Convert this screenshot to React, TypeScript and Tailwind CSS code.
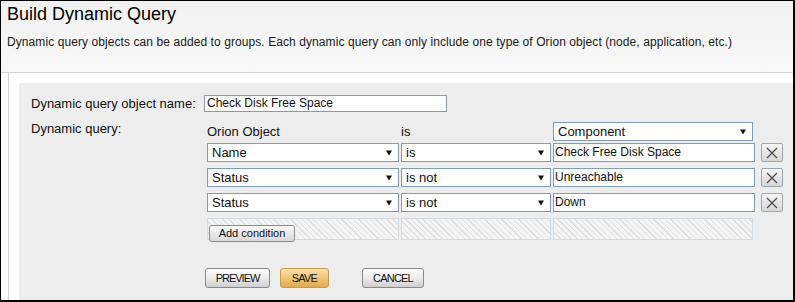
import React from 'react';

const conditions = [
  { field: 'Name', op: 'is', value: 'Check Free Disk Space' },
  { field: 'Status', op: 'is not', value: 'Unreachable' },
  { field: 'Status', op: 'is not', value: 'Down' },
];

function Arrow() {
  return (
    <svg width="6" height="6" viewBox="0 0 6 6" className="shrink-0">
      <polygon points="0,0.5 6,0.5 3,5.5" fill="#111" />
    </svg>
  );
}

function Select({ label, className }: { label: string; className: string }) {
  return (
    <div className={`h-[19px] flex items-center justify-between bg-white border border-[#7f9db9] pl-[4px] pr-[6px] text-[13px] leading-[15px] text-[#111] ${className}`}>
      <span>{label}</span>
      <Arrow />
    </div>
  );
}

function RemoveButton() {
  return (
    <div className="ml-[6px] w-[22px] h-[19px] flex items-center justify-center rounded-[2px] border border-[#9aa7b5] bg-gradient-to-b from-[#f6f6f6] to-[#d6d6d6]">
      <svg width="12" height="12" viewBox="0 0 12 12">
        <path d="M1 1 L11 11 M11 1 L1 11" stroke="#4a4a4a" strokeWidth="1.2" />
      </svg>
    </div>
  );
}

const hatch =
  'border border-[#d3dbe5] bg-[repeating-linear-gradient(45deg,#dedede_0px,#dedede_1px,#f4f4f4_1px,#f4f4f4_4px)]';

export default function App() {
  return (
    <div className="w-[795px] h-[302px] flex flex-col bg-white border-l border-t border-r-2 border-b-2 border-black font-['Liberation_Sans',Arial,sans-serif] text-black">
      <div className="h-[72px] shrink-0 bg-gradient-to-b from-[#f1f1f1] to-[#f9f9f9] border-b border-[#d4d4d4] px-[6px] pt-[2px]">
        <h1 className="text-[18px] leading-[22px]">Build Dynamic Query</h1>
        <p className="mt-[10px] text-[12px] leading-[14px] tracking-[0.08px] text-[#1a1a1a]">
          Dynamic query objects can be added to groups. Each dynamic query can only include one type of Orion object (node, application, etc.)
        </p>
      </div>

      <div className="flex-1 flex pl-[7px]">
        <div className="flex-1 flex border-l border-[#d4d4d4] pl-[10px] pt-[10px]">
          <div className="flex-1 bg-[#ededed] pl-[12px] pt-[12px]">
            <div className="flex items-center">
              <div className="w-[173px] text-[13px] leading-[15px] text-[#111]">Dynamic query object name:</div>
              <div className="w-[243px] h-[17px] bg-white border border-[#7f9db9] px-[2px] text-[12px] leading-[15px] text-[#111]">
                Check Disk Free Space
              </div>
            </div>

            <div className="flex mt-[10px]">
              <div className="w-[173px] text-[13px] leading-[13px] text-[#111]">Dynamic query:</div>
              <div className="ml-[3px]">
                <div className="flex items-center h-[19px] text-[13px] text-[#111]">
                  <div className="w-[192px]">Orion Object</div>
                  <div className="w-[150px] ml-[2px]">is</div>
                  <Select label="Component" className="w-[200px] ml-[2px]" />
                </div>

                {conditions.map((c, i) => (
                  <div key={i} className={`flex items-center ${i === 0 ? 'mt-[2px]' : 'mt-[6px]'}`}>
                    <Select label={c.field} className="w-[192px]" />
                    <Select label={c.op} className="w-[150px] ml-[2px]" />
                    <div className="w-[202px] h-[19px] ml-[2px] bg-white border border-[#7f9db9] px-[1px] text-[12px] leading-[17px] text-[#111]">
                      {c.value}
                    </div>
                    <RemoveButton />
                  </div>
                ))}

                <div className="flex mt-[6px] h-[22px]">
                  <div className={`w-[192px] ${hatch} p-px`}>
                    <button className="w-[86px] h-[17px] rounded-[3px] border border-[#8c8c8c] bg-gradient-to-b from-[#fbfbfb] to-[#d8d8d8] text-[11px] leading-[15px] text-[#111]">
                      Add condition
                    </button>
                  </div>
                  <div className={`w-[150px] ml-[2px] ${hatch}`} />
                  <div className={`w-[200px] ml-[2px] ${hatch}`} />
                </div>
              </div>
            </div>

            <div className="flex mt-[28px] ml-[174px]">
              <button className="w-[65px] h-[20px] rounded-[3px] border border-[#8a8a8a] bg-gradient-to-b from-[#fcfcfc] via-[#ececec] to-[#cfcfcf] text-[11px] tracking-[-1px] text-[#111]">
                PREVIEW
              </button>
              <button className="w-[49px] h-[20px] ml-[10px] rounded-[3px] border border-[#c49a52] bg-gradient-to-b from-[#fae0a8] via-[#f1c674] to-[#e2a94a] text-[11px] tracking-[-0.8px] text-[#111]">
                SAVE
              </button>
              <button className="w-[62px] h-[20px] ml-[33px] rounded-[3px] border border-[#8a8a8a] bg-gradient-to-b from-[#fcfcfc] via-[#ececec] to-[#cfcfcf] text-[11px] tracking-[-0.8px] text-[#111]">
                CANCEL
              </button>
            </div>
          </div>
        </div>
      </div>
    </div>
  );
}
